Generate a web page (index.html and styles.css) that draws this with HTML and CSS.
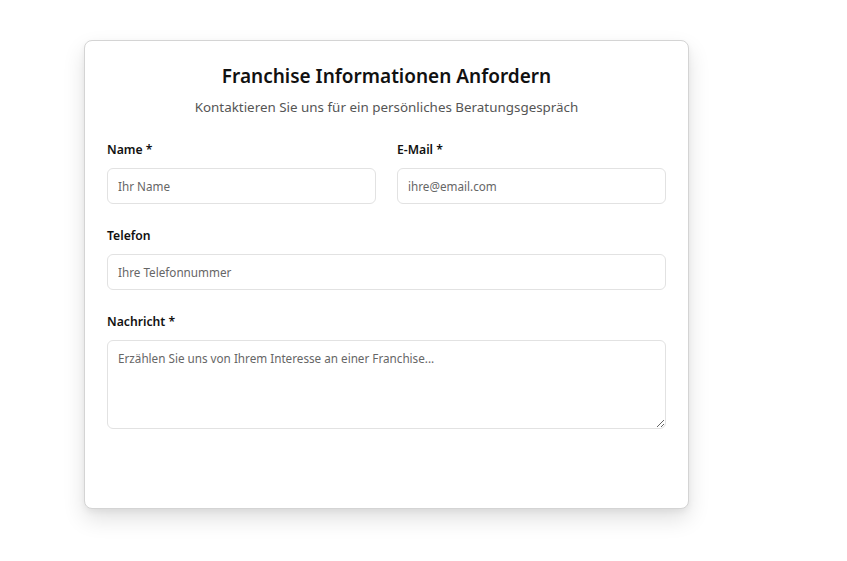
FILE: index.html
```html
<!DOCTYPE html>
<html lang="de">
<head>
<meta charset="utf-8">
<link rel="stylesheet" href="styles.css">
</head>
<body>
<div class="card">
  <h1 class="title">Franchise Informationen Anfordern</h1>
  <p class="subtitle">Kontaktieren Sie uns für ein persönliches Beratungsgespräch</p>
  <form class="form">
    <div class="row">
      <div class="field">
        <label class="label">Name *</label>
        <input class="input" type="text" placeholder="Ihr Name">
      </div>
      <div class="field">
        <label class="label">E-Mail *</label>
        <input class="input" type="email" placeholder="ihre@email.com">
      </div>
    </div>
    <div class="field">
      <label class="label">Telefon</label>
      <input class="input" type="tel" placeholder="Ihre Telefonnummer">
    </div>
    <div class="field">
      <label class="label">Nachricht *</label>
      <textarea class="input textarea" placeholder="Erzählen Sie uns von Ihrem Interesse an einer Franchise..."></textarea>
    </div>
  </form>
</div>
</body>
</html>
```
FILE: styles.css
```css
html, body {
  margin: 0;
  padding: 0;
  background: #ffffff;
}
body {
  font-family: "Noto Sans", "Open Sans", sans-serif;
  padding: 40px 0 0 84px;
  min-height: 100vh;
  box-sizing: border-box;
}
.card {
  box-sizing: border-box;
  width: 605px;
  height: 469px;
  border: 1px solid #d4d4d4;
  border-radius: 8px;
  background: #fff;
  padding: 22px 22px 0 22px;
  box-shadow: 0 10px 22px rgba(0, 0, 0, 0.12), 0 3px 6px rgba(0,0,0,0.05);
}
.title {
  margin: 0;
  text-align: center;
  font-size: 19px;
  line-height: 26px;
  font-weight: 600;
  color: #111;
}
.subtitle {
  margin: 8px 0 0;
  text-align: center;
  font-size: 13.4px;
  line-height: 20px;
  color: #555;
}
.form {
  margin-top: 24px;
  display: flex;
  flex-direction: column;
  gap: 23px;
}
.row {
  display: grid;
  grid-template-columns: 1fr 1fr;
  gap: 21px;
}
.field {
  display: flex;
  flex-direction: column;
  gap: 9px;
}
.label {
  font-size: 12.2px;
  line-height: 18px;
  font-weight: 600;
  color: #111;
}
.input {
  box-sizing: border-box;
  height: 36px;
  border: 1px solid #e2e2e2;
  border-radius: 6px;
  padding: 0 10px;
  font-family: inherit;
  font-size: 11.7px;
  color: #333;
  background: #fff;
  outline: none;
}
.input::placeholder {
  color: #666;
}
.textarea {
  height: 89px;
  padding: 8px 10px;
  resize: vertical;
  line-height: 18px;
}
```
